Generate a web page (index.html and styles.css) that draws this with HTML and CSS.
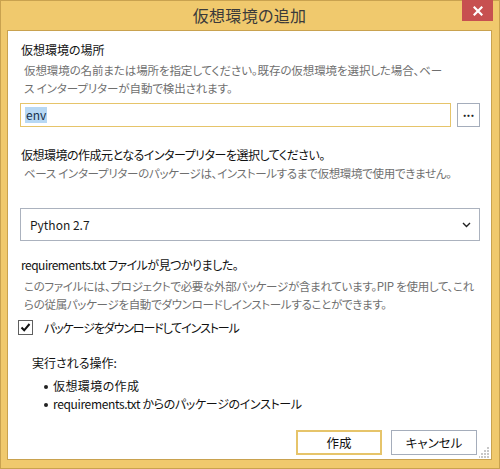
FILE: index.html
```html
<!DOCTYPE html>
<html lang="ja">
<head>
<meta charset="utf-8">
<title>仮想環境の追加</title>
<link rel="stylesheet" href="styles.css">
</head>
<body>
<div class="window">
  <div class="titlebar">
    <span></span>
    <span class="title">仮想環境の追加</span>
    <button class="close" aria-label="閉じる">
      <svg width="10" height="10" viewBox="0 0 10 10"><path d="M1.5 1.5 L8.5 8.5 M8.5 1.5 L1.5 8.5" stroke="#fff" stroke-width="2.2" stroke-linecap="square"/></svg>
    </button>
  </div>
  <div class="content">
    <div class="heading h-first">仮想環境の場所</div>
    <div class="desc desc-first">仮想環境の名前または場所を指定してください。既存の仮想環境を選択した場合、ベー<br>ス インタープリターが自動で検出されます。</div>
    <div class="path-row">
      <div class="input"><span class="sel">env</span></div>
      <button class="browse">...</button>
    </div>

    <div class="heading h-second">仮想環境の作成元となるインタープリターを選択してください。</div>
    <div class="desc">ベース インタープリターのパッケージは、インストールするまで仮想環境で使用できません。</div>
    <div class="select">
      <span>Python 2.7</span>
      <svg width="9" height="6" viewBox="0 0 9 6"><path d="M1 1 L4.5 4.5 L8 1" fill="none" stroke="#222" stroke-width="1.4"/></svg>
    </div>

    <div class="heading h-third">requirements.txt ファイルが見つかりました。</div>
    <div class="desc desc-third">このファイルには、プロジェクトで必要な外部パッケージが含まれています。PIP を使用して、これ<br>らの従属パッケージを自動でダウンロードしインストールすることができます。</div>
    <label class="check-row">
      <span class="checkbox">
        <svg width="13" height="13" viewBox="0 0 13 13"><path d="M2.5 6.5 L5.2 9.3 L10.5 3" fill="none" stroke="#111" stroke-width="2"/></svg>
      </span>
      <span class="check-label">パッケージをダウンロードしてインストール</span>
    </label>

    <div class="ops-title">実行される操作:</div>
    <ul class="ops">
      <li>仮想環境の作成</li>
      <li>requirements.txt からのパッケージのインストール</li>
    </ul>

    <div class="buttons">
      <button class="btn btn-default">作成</button>
      <button class="btn">キャンセル</button>
    </div>
    <svg class="grip" width="11" height="11" viewBox="0 0 11 11">
      <g fill="#c8c8c8">
        <rect x="8" y="0" width="2" height="2"/>
        <rect x="5" y="3" width="2" height="2"/><rect x="8" y="3" width="2" height="2"/>
        <rect x="2" y="6" width="2" height="2"/><rect x="5" y="6" width="2" height="2"/><rect x="8" y="6" width="2" height="2"/>
        <rect x="-1" y="9" width="2" height="2"/><rect x="2" y="9" width="2" height="2"/><rect x="5" y="9" width="2" height="2"/><rect x="8" y="9" width="2" height="2"/>
      </g>
    </svg>
  </div>
</div>
</body>
</html>
```

FILE: styles.css
```css
* { box-sizing: border-box; }

html, body {
  margin: 0;
  padding: 0;
}

body {
  width: 500px;
  height: 469px;
  font-family: "Noto Sans CJK JP", "Noto Sans", sans-serif;
  font-feature-settings: "palt";
  color: #1b1b1b;
  background: #f0c96d;
}

.window {
  width: 500px;
  height: 469px;
  border: 1px solid #c9a24f;
  background: #f0c96d;
  padding: 0 7px 8px 6px;
  display: flex;
  flex-direction: column;
}

.titlebar {
  height: 29px;
  display: grid;
  grid-template-columns: 1fr auto 1fr;
  align-items: start;
}

.title {
  font-size: 16px;
  line-height: 28px;
  color: #3a3a3a;
  letter-spacing: 0.3px;
}

.close {
  justify-self: end;
  margin-top: -1px;
  margin-right: -1px;
  width: 31px;
  height: 21px;
  border: 0;
  padding: 0;
  background: #c75050;
  display: flex;
  align-items: center;
  justify-content: center;
}

.content {
  position: relative;
  flex: 1;
  background: #fff;
  border: 1px solid #c9a24f;
  padding: 0 11px 0 12px;
  display: flex;
  flex-direction: column;
}

.heading {
  font-size: 12px;
  line-height: 18px;
  padding-left: 1px;
  color: #111;
  white-space: nowrap;
  letter-spacing: -0.5px;
}

.h-first { margin-top: 10px; letter-spacing: 0; }
.h-second { margin-top: 19px; }
.h-third { margin-top: 15px; }

.desc {
  font-size: 11.5px;
  line-height: 18px;
  color: #6f6f6f;
  padding-left: 4px;
  white-space: nowrap;
  letter-spacing: -0.3px;
}

.desc-first { margin-top: 2px; letter-spacing: -0.1px; }
.desc-third { margin-top: 3px; }

.path-row {
  margin-top: 6px;
  display: flex;
  gap: 6px;
  height: 24px;
}

.input {
  flex: 1;
  border: 1px solid #e6c46a;
  display: flex;
  align-items: center;
  padding-left: 4px;
  font-size: 12px;
}

.sel {
  background: #b7d8f4;
  color: #17324d;
  line-height: 16px;
  padding: 0 1px;
}

.browse {
  width: 23px;
  height: 24px;
  border: 1px solid #a5adbb;
  background: #fff;
  padding: 0 0 6px;
  font-size: 12px;
  font-family: inherit;
  font-weight: bold;
  color: #222;
  line-height: 12px;
}

.select {
  margin-top: 26px;
  height: 33px;
  border: 1px solid #abb2be;
  display: flex;
  align-items: center;
  justify-content: space-between;
  padding: 0 8px 0 9px;
  font-size: 12px;
  color: #1b1b1b;
}

.check-row {
  margin-top: 5px;
  margin-left: -2px;
  height: 18px;
  display: flex;
  align-items: center;
  gap: 11px;
}

.checkbox {
  width: 15px;
  height: 15px;
  border: 1px solid #5f5f5f;
  display: flex;
  align-items: center;
  justify-content: center;
}

.check-label {
  font-size: 12px;
  letter-spacing: -1.1px;
  color: #111;
}

.ops-title {
  margin-top: 18px;
  padding-left: 12px;
  font-size: 12px;
  line-height: 18px;
  color: #111;
}

.ops {
  margin: 5px 0 0;
  padding: 0 0 0 24px;
  list-style: none;
}

.ops li {
  position: relative;
  font-size: 12px;
  line-height: 18px;
  color: #111;
  padding-left: 9px;
  letter-spacing: -0.35px;
}

.ops li:first-child { letter-spacing: 0.4px; }

.ops li::before {
  content: "";
  position: absolute;
  left: 0;
  top: 8px;
  width: 4px;
  height: 4px;
  border-radius: 50%;
  background: #222;
}

.buttons {
  margin-top: auto;
  margin-bottom: 4px;
  display: flex;
  justify-content: flex-end;
  gap: 9px;
  padding-right: 3px;
}

.btn {
  width: 86px;
  height: 25px;
  border: 1px solid #a5adbb;
  background: #fff;
  font-family: inherit;
  font-feature-settings: "palt";
  font-size: 12.5px;
  color: #111;
  padding: 0;
}

.btn-default {
  border: 2px solid #e6c46a;
}

.grip {
  position: absolute;
  right: 1px;
  bottom: 1px;
}
```
